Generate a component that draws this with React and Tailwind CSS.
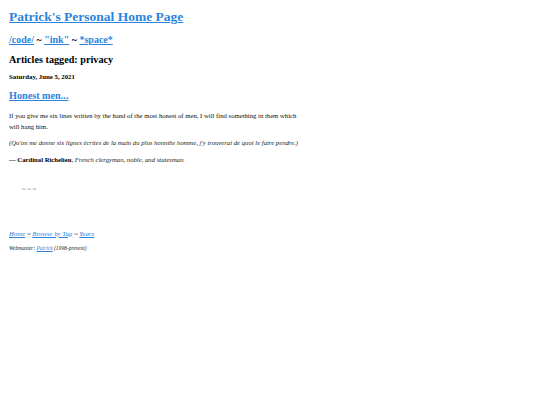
export default function App() {
  const link = "text-[#2b83dd] underline";
  return (
    <div className="min-h-[405px] bg-white text-black" style={{ fontFamily: '"Liberation Serif", "Times New Roman", serif' }}>
      <div className="px-[9px] pt-[8px] w-[314px]">
        <h1 className="text-[13.5px] font-bold leading-[18px]">
          <a href="#" className={link}>Patrick's Personal Home Page</a>
        </h1>
        <div className="mt-[7px] text-[10px] font-bold leading-[14px]">
          <a href="#" className={link}>/code/</a> ~ <a href="#" className={link}>"ink"</a> ~ <a href="#" className={link}>*space*</a>
        </div>
        <h2 className="mt-[6px] text-[10.2px] font-bold leading-[14px]">Articles tagged: privacy</h2>
        <div className="mt-[5px] text-[6.8px] font-bold leading-[10px]">Saturday, June 5, 2021</div>
        <h3 className="mt-[7px] text-[10.2px] font-bold leading-[14px]">
          <a href="#" className={link}>Honest men...</a>
        </h3>
        <p className="mt-[6.5px] text-[6.7px] leading-[11px] text-[#111]">
          If you give me six lines written by the hand of the most honest of men, I will find something in them which will hang him.
        </p>
        <p className="mt-[5px] text-[6.7px] leading-[11px] italic text-[#222]">
          (Qu'on me donne six lignes écrites de la main du plus honnête homme, j'y trouverai de quoi le faire pendre.)
        </p>
        <p className="mt-[6px] text-[6.7px] leading-[11px]">
          <b>— Cardinal Richelieu</b>, <i className="text-[#222]">French clergyman, noble, and statesman</i>
        </p>
        <div className="mt-[18px] pl-[13px] text-[6.7px] leading-[11px] text-[#555]">~ ~ ~</div>
        <div className="mt-[34px] text-[6.8px] leading-[11px] italic">
          <a href="#" className={link}>Home</a> ~ <a href="#" className={link}>Browse by Tag</a> ~ <a href="#" className={link}>Years</a>
        </div>
        <div className="mt-[4.5px] text-[5.5px] leading-[10px] italic text-[#222]">
          Webmaster: <a href="#" className={link}>Patrick</a> (1998-present)
        </div>
      </div>
    </div>
  );
}
